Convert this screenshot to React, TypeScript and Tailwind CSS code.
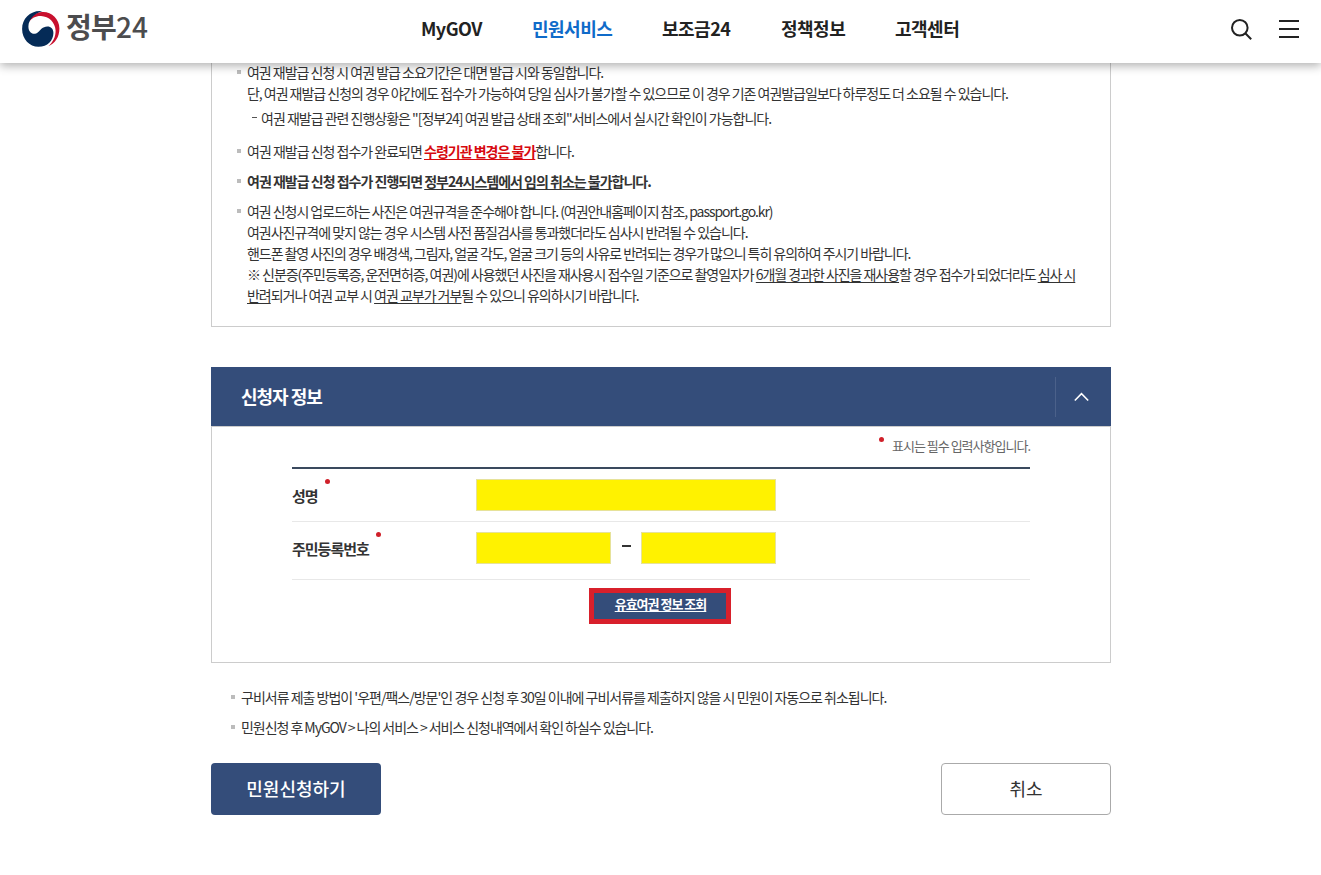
import type { ReactNode } from "react";

const NAV = [
  { label: "MyGOV", width: "w-[62px]" },
  { label: "민원서비스", width: "w-[81px]", active: true },
  { label: "보조금24", width: "w-[70px]" },
  { label: "정책정보", width: "w-[65px]" },
  { label: "고객센터", width: "w-[65px]" },
];

function Logo() {
  return (
    <a href="#" className="flex items-start" aria-label="정부24">
      <svg width="38" height="38" viewBox="0 0 38 38" aria-hidden="true">
        <path d="M7 12C8.5 6 14 2.2 20 2C29 1.2 37.4 8.5 37.4 18.5C37.4 27 33 33.5 26.3 36.3C31 32 33.8 27 33.6 20.5C33.2 12.5 27 6.3 19 6C14 5.8 9.5 8 7 12Z" fill="#c8102e" />
        <path d="M20.5 1.1C9 -0.2 0.1 8 0.1 19C0.1 29 7.5 36.8 16.5 36.8C25.5 36.8 31.4 30.5 31.4 23C31.4 18.5 28.8 16.3 25.3 16.4C20.5 16.6 18.5 19.8 16 22.3C13.5 24.4 10.6 24.2 8.7 22.5C6 20 5.8 15 7.5 11.5C9.8 6.5 14.5 2.8 20.5 1.1Z" fill="#052b57" />
      </svg>
      <span className="ml-1.5 text-[28px] leading-8 font-bold tracking-[-0.8px] text-[#4c4c4e]">
        정부<span className="font-medium tracking-normal">24</span>
      </span>
    </a>
  );
}

function Header() {
  return (
    <header className="relative z-10 flex h-[63px] items-start bg-white shadow-[0_3px_9px_rgba(0,0,0,0.3)]">
      <div className="w-[421px] pt-2.5 pl-[22px]">
        <Logo />
      </div>
      <nav className="flex gap-[49px] pt-[15px] text-[18px] leading-[26px] font-bold tracking-[-0.5px] whitespace-nowrap">
        {NAV.map((item) => (
          <a key={item.label} href="#" className={`${item.width} ${item.active ? "text-[#0f6bc9]" : "text-[#222]"}`}>
            {item.label}
          </a>
        ))}
      </nav>
      <div className="ml-auto flex gap-[26px] pt-[18px] pr-[21px]">
        <button type="button" aria-label="검색">
          <svg width="23" height="23" viewBox="0 0 23 23" fill="none" stroke="#222" strokeWidth="2">
            <circle cx="9.8" cy="9.8" r="7.8" />
            <path d="M15.3 15.3L21.2 21.2" />
          </svg>
        </button>
        <button type="button" aria-label="전체메뉴">
          <svg width="21" height="23" viewBox="0 0 21 23" stroke="#222" strokeWidth="2">
            <path d="M0 3H20M0 11H20M0 19H20" />
          </svg>
        </button>
      </div>
    </header>
  );
}

function Item({ children, className = "" }: { children: ReactNode; className?: string }) {
  return (
    <li className={`flex ${className}`}>
      <span className="mt-2 mr-1.5 size-1 shrink-0 bg-[#bcbcbc]" />
      <div className="whitespace-nowrap">{children}</div>
    </li>
  );
}

function Under({ children }: { children: ReactNode }) {
  return <span className="underline underline-offset-2">{children}</span>;
}

function Dot({ className = "" }: { className?: string }) {
  return <i className={`size-[5px] rounded-full bg-[#d0202a] ${className}`} />;
}

function Notice() {
  return (
    <section className="-mt-[9px] h-[273px] border border-[#ccc] pt-[7px] pl-[25px]">
      <ul>
        <Item>
          <p className="tracking-[-1.02px]">여권 재발급 신청 시 여권 발급 소요기간은 대면 발급 시와 동일합니다.</p>
          <p className="tracking-[-1.03px]">단, 여권 재발급 신청의 경우 야간에도 접수가 가능하여 당일 심사가 불가할 수 있으므로 이 경우 기존 여권발급일보다 하루정도 더 소요될 수 있습니다.</p>
          <p className="mt-1 flex pl-[5px]">
            <span className="mt-[9px] mr-1 h-px w-[5px] bg-[#555]" />
            여권 재발급 관련 진행상황은 "[정부24] 여권 발급 상태 조회"서비스에서 실시간 확인이 가능합니다.
          </p>
        </Item>
        <Item className="mt-3">
          여권 재발급 신청 접수가 완료되면 <b className="text-[#d7090f]"><Under>수령기관 변경은 불가</Under></b>합니다.
        </Item>
        <Item className="mt-[9px]">
          <b>여권 재발급 신청 접수가 진행되면 <Under>정부24시스템에서 임의 취소는 불가</Under>합니다.</b>
        </Item>
        <Item className="mt-[9px]">
          <p className="tracking-[-1.05px]">여권 신청시 업로드하는 사진은 여권규격을 준수해야 합니다. (여권안내홈페이지 참조, passport.go.kr)</p>
          <p className="tracking-[-1.02px]">여권사진규격에 맞지 않는 경우 시스템 사전 품질검사를 통과했더라도 심사시 반려될 수 있습니다.</p>
          <p className="tracking-[-1.06px]">핸드폰 촬영 사진의 경우 배경색, 그림자, 얼굴 각도, 얼굴 크기 등의 사유로 반려되는 경우가 많으니 특히 유의하여 주시기 바랍니다.</p>
          <p className="tracking-[-1.04px]">
            ※ 신분증(주민등록증, 운전면허증, 여권)에 사용했던 사진을 재사용시 접수일 기준으로 촬영일자가 <Under>6개월 경과한 사진을 재사용</Under>할 경우 접수가 되었더라도 <Under>심사 시</Under>
          </p>
          <p className="tracking-[-1.02px]">
            <Under>반려</Under>되거나 여권 교부 시 <Under>여권 교부가 거부</Under>될 수 있으니 유의하시기 바랍니다.
          </p>
        </Item>
      </ul>
    </section>
  );
}

function Applicant() {
  const field = "h-8 border border-[#e6e29a] bg-[#fff200] px-2 outline-none";

  return (
    <section className="mt-10">
      <div className="flex h-[59px] items-center justify-between bg-[#344d7a] pl-[30px] text-white">
        <h2 className="pb-0.5 text-[18px] leading-6 font-bold tracking-[-1px]">신청자 정보</h2>
        <button type="button" aria-label="접기" className="flex h-10 w-14 items-center border-l border-[#4b618a] pl-[18px]">
          <svg width="15" height="10" viewBox="0 0 15 10" fill="none" stroke="white" strokeWidth="1.6">
            <path d="M0.8 8.5L7.5 1.6L14.2 8.5" />
          </svg>
        </button>
      </div>
      <div className="h-[237px] border border-[#ccc] px-20">
        <p className="flex h-10 justify-end pt-2 text-[13px] text-[#666]">
          <Dot className="mt-0.5 mr-2" />
          표시는 필수 입력사항입니다.
        </p>
        <div className="flex h-[55px] border-t-2 border-b border-t-[#3a4a5e] border-b-[#e8e8e8] pt-2.5">
          <label className="flex w-[184px] pt-1.5 text-[15px] leading-[21px] font-bold">
            성명
            <Dot className="-mt-1.5 ml-[7px]" />
          </label>
          <input className={`${field} w-[300px]`} />
        </div>
        <div className="flex h-[58px] border-b border-[#e8e8e8] pt-2.5">
          <label className="flex w-[184px] pt-1.5 text-[15px] leading-[21px] font-bold">
            주민등록번호
            <Dot className="-mt-1.5 ml-[7px]" />
          </label>
          <input className={`${field} w-[135px]`} />
          <span className="mr-2.5 ml-[11px] mt-[13px] h-0.5 w-[9px] bg-[#333]" />
          <input className={`${field} w-[135px]`} />
        </div>
        <div className="mt-2 flex justify-center">
          <button type="button" className="-ml-0.5 h-9 w-[142px] border-5 border-[#d8202b] bg-[#344d7a] pb-1 pl-px text-[13px] leading-[22px] font-bold text-white underline underline-offset-2">
            유효여권 정보 조회
          </button>
        </div>
      </div>
    </section>
  );
}

export default function App() {
  return (
    <div className="min-h-screen bg-white font-['Noto_Sans_CJK_KR','Noto_Sans',sans-serif] text-[#333]">
      <Header />
      <main className="ml-[211px] w-[900px] text-[14px] leading-[21px] tracking-[-1px]">
        <Notice />
        <Applicant />
        <ul className="mt-6 pl-5">
          <Item>구비서류 제출 방법이 '우편/팩스/방문'인 경우 신청 후 30일 이내에 구비서류를 제출하지 않을 시 민원이 자동으로 취소됩니다.</Item>
          <Item className="mt-[9px] tracking-[-1.05px]">민원신청 후 MyGOV &gt; 나의 서비스 &gt; 서비스 신청내역에서 확인 하실수 있습니다.</Item>
        </ul>
        <div className="mt-[25px] flex justify-between text-[18px] tracking-normal">
          <button type="button" className="h-[52px] w-[170px] rounded bg-[#344d7a] pb-0.5 font-medium text-white">
            민원신청하기
          </button>
          <button type="button" className="h-[52px] w-[170px] rounded border border-[#aaa] bg-white pb-0.5">
            취소
          </button>
        </div>
      </main>
    </div>
  );
}
